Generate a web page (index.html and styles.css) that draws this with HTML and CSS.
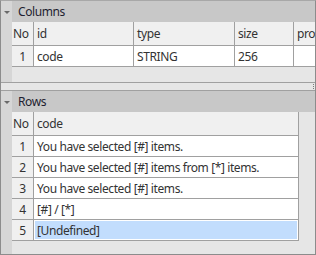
FILE: index.html
```html
<!DOCTYPE html>
<html>
  <head>
    <title>Table Editor</title>
    <link rel="stylesheet" href="styles.css">
  </head>
  <body>
    <div class="frame">
      <div class="panel panel-columns">
        <div class="panel-head">
          <span class="toggle"><span class="tri"></span></span>
          <span class="title">Columns</span>
        </div>
        <div class="panel-body">
          <div class="strip"></div>
          <div class="grid-wrap">
            <table class="grid cols">
              <tr class="hdr"><td class="no">No</td><td>id</td><td>type</td><td>size</td><td>pro</td></tr>
              <tr><td class="no num">1</td><td>code</td><td>STRING</td><td>256</td><td></td></tr>
            </table>
          </div>
        </div>
      </div>
      <div class="splitter"><span class="grip"></span></div>
      <div class="panel panel-rows">
        <div class="panel-head">
          <span class="toggle"><span class="tri"></span></span>
          <span class="title">Rows</span>
        </div>
        <div class="panel-body">
          <div class="strip"></div>
          <div class="grid-wrap">
            <table class="grid rows">
              <tr class="hdr"><td class="no">No</td><td>code</td></tr>
              <tr><td class="no num">1</td><td>You have selected [#] items.</td></tr>
              <tr><td class="no num">2</td><td>You have selected [#] items from [*] items.</td></tr>
              <tr><td class="no num">3</td><td>You have selected [#] items.</td></tr>
              <tr><td class="no num">4</td><td>[#] / [*]</td></tr>
              <tr class="sel"><td class="no num">5</td><td>[Undefined]</td></tr>
            </table>
          </div>
        </div>
      </div>
    </div>
  </body>
</html>
```

FILE: styles.css
```css
body{
  margin: 0;
  font-family: "Noto Sans", sans-serif;
  font-size: 12px;
  letter-spacing: -0.4px;
  color: #333;
}

.frame{
  width: 316px;
  height: 255px;
  box-sizing: border-box;
  border: 1px solid #8c8c8c;
  border-top-color: #a8a8a8;
  background: #e6e6e6;
  display: flex;
  flex-direction: column;
  overflow: hidden;
}

.panel-head{
  display: flex;
  height: 21px;
  background: #c8c8c8;
  align-items: center;
}

.toggle{
  width: 11px;
  height: 100%;
  background: #d6d6d6;
  display: flex;
  align-items: center;
  justify-content: center;
}

.tri{
  width: 0;
  height: 0;
  border-left: 3px solid transparent;
  border-right: 3px solid transparent;
  border-top: 3px solid #6a6a6a;
  margin-top: 1px;
}

.title{
  margin-left: 6px;
  color: #1e1e30;
}

.panel-body{
  display: flex;
}

.strip{
  width: 11px;
  background: #d6d6d6;
}

.grid-wrap{
  flex: 1;
  overflow: hidden;
}

.panel-columns .panel-body{
  height: 60px;
  border-bottom: 1px solid #a0a0a0;
}

.panel-rows{
  flex: 1;
  display: flex;
  flex-direction: column;
}

.panel-rows .panel-body{
  flex: 1;
}

.splitter{
  height: 7px;
  background: #e6e6e6;
  border-bottom: 1px solid #a0a0a0;
  position: relative;
}

.grip{
  position: absolute;
  right: 1px;
  top: 1px;
  width: 1px;
  height: 5px;
  background: repeating-linear-gradient(#7a7a7a 0 1px, transparent 1px 2px);
}

.grid{
  border-collapse: collapse;
  table-layout: fixed;
}

.grid td{
  border: 1px solid #a0a0a0;
  padding: 0 0 0 3px;
  height: 20px;
  background: #fff;
  white-space: nowrap;
  overflow: hidden;
}

.grid tr:first-child td{
  border-top: none;
}

.grid td:first-child{
  border-left: none;
}

.grid .hdr td{
  height: 23px;
  background: #f0f0f0;
}

.grid td.no{
  background: #f0f0f0;
  padding-left: 1px;
}

.grid td.num{
  text-align: center;
  padding-left: 0;
}

.cols{
  width: 330px;
}

.cols td:nth-child(1){ width: 20px; }
.cols td:nth-child(2){ width: 96px; }
.cols td:nth-child(3){ width: 97px; }
.cols td:nth-child(4){ width: 55px; }
.cols td:nth-child(5){ width: 56px; }

.rows{
  width: 287px;
}

.rows td:nth-child(1){ width: 20px; }

.grid .sel td:nth-child(2){
  background: #c2ddfd;
  box-shadow: inset 0 0 0 1px #fff;
}
```
